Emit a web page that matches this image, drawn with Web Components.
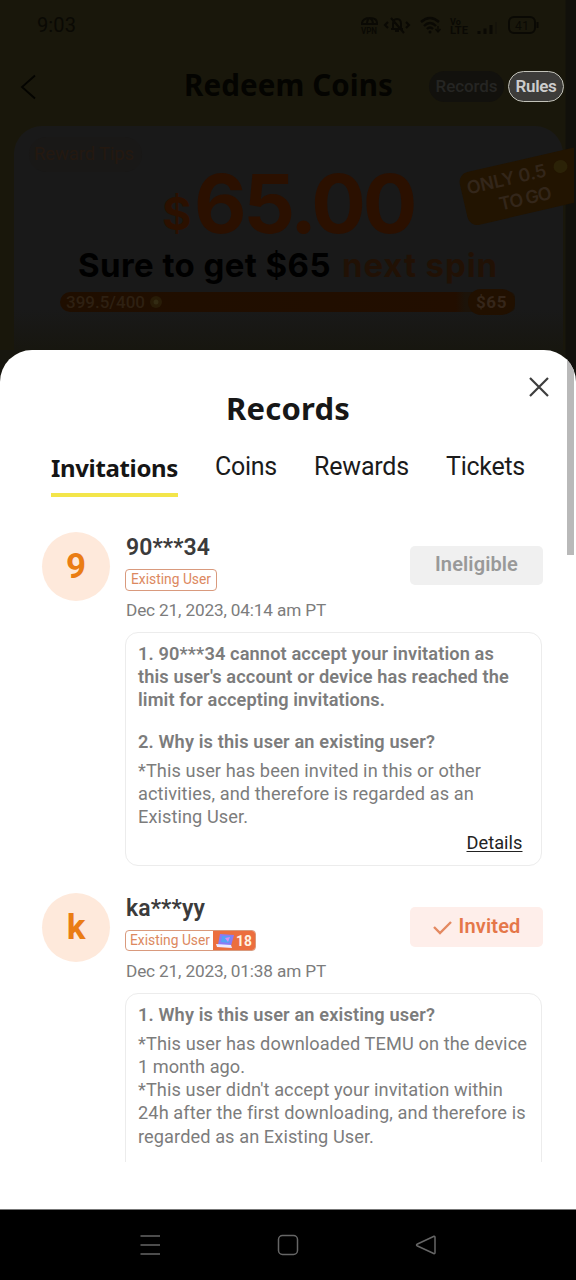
<!DOCTYPE html>
<html lang="en">
<head>
<meta charset="utf-8">
<title>Records</title>
<style>
html, body { margin: 0; padding: 0; background: #000; }
body { width: 576px; height: 1280px; overflow: hidden; font-family: Roboto, "Liberation Sans", sans-serif; }
</style>
</head>
<body>
<reward-app></reward-app>
<script>
const define = (name, html, after) => {
  const template = document.createElement('template');
  template.innerHTML = html;
  customElements.define(name, class extends HTMLElement {
    connectedCallback() {
      if (this.shadowRoot) return;
      this.attachShadow({ mode: 'open' }).append(template.content.cloneNode(true));
      if (after) after(this, this.shadowRoot);
    }
  });
};

/* One line of text; "w" is its width in px, reached by tracking. */
define('text-line', `<style>
:host { display: block; white-space: nowrap; width: max-content; }
span { display: inline-block; }
:host([underlined]) span { text-decoration: underline; text-underline-offset: 2px; }
</style><span><slot></slot></span>`, (el, root) => {
  const w = parseFloat(el.getAttribute('w'));
  if (!w) return;
  const span = root.querySelector('span');
  const n = el.textContent.length;
  const s = (w - span.getBoundingClientRect().width) / n;
  span.style.letterSpacing = s.toFixed(3) + 'px';
});

define('status-bar', `<style>
:host { display: flex; height: 52px; box-sizing: border-box; padding: 0 33px 2px 37px; align-items: center; justify-content: space-between; color: #0a0904; font-size: 20px; }
svg { display: block; }
</style>
<text-line w="39">9:03</text-line>
<svg width="185" height="24" viewBox="0 0 185 24" fill="none" stroke="currentColor" stroke-width="2">
<path d="M4 12V10Q5 5 12 5T19 10V12M4 11H19M9 11Q9 6 12 5Q15 7 15 11"/>
<text x="3" y="21" font-size="9" font-weight="700" fill="currentColor" stroke="none" textLength="16" lengthAdjust="spacingAndGlyphs" font-family="Roboto">VPN</text>
<path d="M33 16H45M35 16V11Q35 6 39 6T43 11V16M37 18H41M33 5L46 20M30 9L27 12L30 15M48 9L51 12L48 15"/>
<path d="M63 9Q72 1 81 9M66 13Q72 7 78 13M69 16Q72 13 75 16" stroke-width="2.4"/><circle cx="72" cy="19" r="1.500" fill="currentColor" stroke="none"/><path d="M80 13V19M77.500 16L80 19L82.500 16" stroke-width="1.300"/>
<text x="92" y="12" font-size="9" font-weight="700" fill="currentColor" stroke="none" font-family="Roboto">Vo</text>
<text x="92" y="21" font-size="10" font-weight="700" fill="currentColor" stroke="none" textLength="18" lengthAdjust="spacingAndGlyphs" font-family="Roboto">LTE</text>
<path d="M121 21V18M127 21V15.500M133 21V12" stroke-width="3"/><path d="M138 21V9" stroke="#15130a" stroke-width="2"/>
<rect x="151" y="4" width="26" height="16" rx="5" stroke-width="2"/><path d="M179.500 9V15"/>
<text x="157" y="16.500" font-size="12" fill="currentColor" stroke="none" font-family="Roboto" textLength="14">41</text>
</svg>`);

define('page-header', `<style>
:host { display: grid; grid-template-columns: 184px 209px 36px 75px 4px 56px; height: 68px; align-items: center; color: #040401; }
svg { display: block; margin: 2px 0 0 20px; }
.title { font: 700 29.500px/40px "Noto Sans", sans-serif; margin-top: -3px; }
.pill { height: 31px; border-radius: 16px; box-sizing: border-box; display: flex; align-items: center; justify-content: center; font-size: 17px; font-weight: 500; }
.pill text-line { margin-top: -1px; }
.dim { background: #12110d; color: #252523; }
.lit { background: #3d3c3a; color: #cdcdcd; border: 1px solid #c2c2b9; font-weight: 600; font-size: 17px; }
</style>
<svg width="17" height="26" viewBox="0 0 17 26" fill="none" stroke="currentColor" stroke-width="1.800"><path d="M15 1.500L2 13L15 24.500"/></svg>
<text-line class="title" w="209">Redeem Coins</text-line><i></i>
<div class="pill dim"><text-line w="62">Records</text-line></div><i></i>
<div class="pill lit"><text-line w="41">Rules</text-line></div>`);

define('reward-card', `<style>
:host { display: block; position: relative; margin: 6px 13px 0 14px; height: 224px; border-radius: 28px 28px 0 0; background: linear-gradient(#191919 82%, #17160f); color: #1d0c00; font-family: Inter, sans-serif; font-weight: 700; }
.tips { position: absolute; left: 15px; top: 11px; width: 113px; height: 35px; border-radius: 18px; background: #191817; font: 400 18.500px/35px Roboto; color: #241810; }
.tips text-line { margin-left: 5px; }
.amount { display: flex; align-items: flex-start; height: 112px; padding: 36px 0 0 148px; color: #2b1000; box-sizing: border-box; }
.amount .cur { font-size: 45px; line-height: 50px; margin: 27px 3px 0 0; }
.amount .num { font-size: 81px; line-height: 84px; }
.line { display: flex; gap: 11px; padding-left: 64px; font-size: 33px; line-height: 36px; height: 54px; padding-top: 9px; box-sizing: border-box; color: #000; }
.line .hl { color: #211105; }
.bar { display: flex; align-items: center; width: 455px; margin-left: 46px; height: 20px; border-radius: 10px 5px 5px 10px; background: linear-gradient(90deg, #1f0e00, #220e00 87%, #1c1309 89%); color: #2e2012; font: 500 17px/20px Roboto; }
.bar .count { margin-left: 6px; flex: none; }
.bar svg { margin-left: 4px; flex: none; }
.bar .goal { margin-left: auto; width: 47px; height: 26px; flex: none; border-radius: 13px; background: #211000; display: flex; align-items: center; justify-content: center; color: #35261a; font-weight: 700; }
.clip { position: absolute; right: -11px; top: 10px; width: 126px; height: 98px; overflow: hidden; }
.ribbon { position: absolute; left: 14px; top: 23px; width: 130px; height: 54px; border-radius: 10px; background: #221401; transform: rotate(-13deg); color: #33261a; font-size: 18px; line-height: 23px; padding-top: 4px; box-sizing: border-box; font-weight: 600; }
.ribbon .a { margin-left: 6px; } .ribbon .b { margin-left: 34px; }
.ribbon i { position: absolute; left: 95px; top: 9px; width: 14px; height: 13px; border-radius: 50%; background: #2b2207; }
</style>
<div class="tips"><text-line w="100">Reward Tips</text-line></div>
<div class="amount"><text-line class="cur" w="29">$</text-line><text-line class="num" w="220">65.00</text-line></div>
<div class="line"><text-line w="253">Sure to get $65</text-line><text-line class="hl" w="156">next spin</text-line></div>
<div class="bar"><text-line class="count" w="79">399.5/400</text-line><svg width="14" height="14" viewBox="0 0 14 14"><circle cx="7" cy="7" r="6" fill="#281c07"/><circle cx="7" cy="7" r="2.500" fill="#332b13"/></svg><div class="goal"><text-line w="31">$65</text-line></div></div>
<div class="clip"><div class="ribbon"><text-line class="a" w="84">ONLY 0.5</text-line><text-line class="b" w="56">TO GO</text-line><i></i></div></div>`);

define('record-tabs', `<style>
:host { display: grid; grid-template-columns: 164px 99px 132px auto; padding-left: 51px; height: 54px; color: #1b1b1b; font-size: 25px; line-height: 31px; }
.on { font: 700 24px/31px "Noto Sans", sans-serif; color: #151515; padding: 1px 0 16px; height: 25px; border-bottom: 4px solid #f3e54a; }
</style>
<text-line class="on" w="127">Invitations</text-line><text-line w="62">Coins</text-line><text-line w="95">Rewards</text-line><text-line w="79">Tickets</text-line>`);

define('user-tag', `<style>
:host { display: flex; width: max-content; height: 22px; box-sizing: border-box; border: 1px solid #d99a7d; border-radius: 4px; color: #dc8860; font-size: 13.800px; line-height: 18px; overflow: hidden; }
.t { margin: 0 5px 0 5px; }
.more { display: none; background: #ec6e3e; color: #fff3e4; font-weight: 700; align-items: center; width: 43px; margin: -1px; height: 22px; }
:host([level]) { height: 21px; }
:host([level]) .more { display: flex; } :host([level]) .t { margin: 0 4px 0 4px; }
svg { margin: 0 1px 0 3px; }
</style>
<text-line class="t" w="80">Existing User</text-line>
<div class="more"><svg width="19" height="16" viewBox="0 0 19 16"><path d="M4 1L18 2L15 13L2 12Z" fill="#8b7bf5"/><path d="M6 3L15 3.500L13 10L5 9Z" fill="#55a2f5"/><path d="M9 5L14 4L12 9Z" fill="#d58cf6"/><path d="M0 11L15 12L16 15L1 14Z" fill="#eee9ff"/></svg><span></span></div>`, (el, root) => {
  root.querySelector('span').textContent = el.getAttribute('level') || '';
});

define('state-button', `<style>
:host { display: flex; width: 133px; height: 39px; border-radius: 5px; background: #f0f0f0; color: #999; align-items: center; justify-content: center; font-size: 20px; font-weight: 600; line-height: 36px; position: relative; left: 1px; }
:host([invited]) { background: #feeeea; color: #e57749; height: 40px; }
text-line, slot { display: block; margin-top: -3px; }
svg { display: none; margin-right: 7px; }
:host([invited]) svg { display: block; }
</style><svg width="19" height="15" viewBox="0 0 19 15" fill="none" stroke="#e48961" stroke-width="2.400"><path d="M1 7L7 13L18 2"/></svg><slot></slot>`);

define('record-entry', `<style>
:host { display: grid; grid-template-columns: 83px 417px; padding-left: 42px; }
.avatar { width: 68px; height: 69px; border-radius: 50%; background: #fee9db; color: #ea7d14; font-size: 35px; font-weight: 700; line-height: 69px; text-align: center; }
.top { display: flex; justify-content: space-between; height: 100px; }
.name { font-size: 23px; line-height: 31px; font-weight: 600; color: #3b3b3b; margin-left: 1px; }
.tag { height: 28px; padding-top: 6px; }
.date { margin: 2px 0 0 1px; font-size: 17.200px; line-height: 22px; color: #7c7c7c; }
.btn { margin-top: 14px; }
.box { box-sizing: border-box; border: 1px solid #ececec; border-radius: 13px; padding: 9px 0 0 12px; color: #7c7c7c; font-size: 18.200px; line-height: 23.200px; }
</style>
<div class="avatar"><slot name="initial"></slot></div>
<div><div class="top"><div><div class="name"><slot name="name"></slot></div><div class="tag"><slot name="tag"></slot></div><div class="date"><slot name="date"></slot></div></div><div class="btn"><slot name="state"></slot></div></div>
<div class="box" part="box"><slot></slot></div></div>`);

define('records-sheet', `<style>
:host { display: block; position: relative; height: 860px; background: #fff; border-radius: 32px 32px 0 0; border-bottom: 1px solid #777; box-sizing: border-box; overflow: hidden; }
.title { font: 700 31px/48px "Noto Sans", sans-serif; color: #171717; padding: 34px 0 0 226px; height: 67px; }
.close { position: absolute; left: 529px; top: 27px; }
.thumb { position: absolute; right: 2px; top: 0; width: 7px; height: 205px; background: #b9b9b9; }
.list { height: 630px; overflow: hidden; margin-top: 27px; }
.first { height: 361px; }
.second { height: 362px; }
.first::part(box) { height: 234px; }
.second::part(box) { height: 240px; }
.b { font-weight: 600; }
</style>
<text-line class="title" w="124">Records</text-line>
<svg class="close" width="20" height="20" viewBox="0 0 20 20" fill="none" stroke="#3d3d3d" stroke-width="2.200"><path d="M1 1L19 19M19 1L1 19"/></svg>
<record-tabs></record-tabs>
<div class="list">
<record-entry class="first"><span slot="initial">9</span><text-line slot="name" w="84">90***34</text-line><user-tag slot="tag"></user-tag><text-line slot="date" w="200">Dec 21, 2023, 04:14 am PT</text-line><state-button slot="state"><text-line w="83">Ineligible</text-line></state-button>
<text-line class="b" w="356">1. 90***34 cannot accept your invitation as</text-line>
<text-line class="b" w="371">this user's account or device has reached the</text-line>
<text-line class="b" w="247">limit for accepting invitations.</text-line>
<text-line class="b" w="297" style="margin:18.500px 0 5.500px">2. Why is this user an existing user?</text-line>
<text-line w="343">*This user has been invited in this or other</text-line>
<text-line w="336">activities, and therefore is regarded as an</text-line>
<text-line w="110">Existing User.</text-line>
<text-line w="56" underlined style="margin:3px 0 0 328.500px;color:#222">Details</text-line>
</record-entry>
<record-entry class="second"><span slot="initial">k</span><text-line slot="name" w="79">ka***yy</text-line><user-tag slot="tag" level="18"></user-tag><text-line slot="date" w="200">Dec 21, 2023, 01:38 am PT</text-line><state-button slot="state" invited><text-line w="62">Invited</text-line></state-button>
<text-line class="b" w="297" style="margin-bottom:5.500px">1. Why is this user an existing user?</text-line>
<text-line w="389">*This user has downloaded TEMU on the device</text-line>
<text-line w="107">1 month ago.</text-line>
<text-line w="365">*This user didn't accept your invitation within</text-line>
<text-line w="387">24h after the first downloading, and therefore is</text-line>
<text-line w="236">regarded as an Existing User.</text-line>
</record-entry>
</div>
<div class="thumb"></div>`);

define('nav-bar', `<style>
:host { display: flex; height: 70px; box-sizing: border-box; background: #000; justify-content: center; gap: 116px; padding-bottom: 1px; align-items: center; }
</style>
<svg width="22" height="22" viewBox="0 0 22 22" stroke="#666" stroke-width="1.500"><path d="M1.500 2H21M1.500 11H21M1.500 20H21"/></svg>
<svg width="22" height="22" viewBox="0 0 22 22" fill="none" stroke="#666" stroke-width="1.500"><rect x="1.500" y="1.500" width="19" height="19" rx="4"/></svg>
<svg width="22" height="22" viewBox="0 0 22 22" fill="none" stroke="#666" stroke-width="1.500"><path d="M19 2.300Q20 2 20 3.500V18.500Q20 20 18.700 19.500L2.500 12Q0.500 11 2.500 10Z"/></svg>`);

define('reward-app', `<style>
:host { display: block; width: 576px; height: 1280px; }
.back { height: 350px; background: linear-gradient(90deg, #19170b 565px, #11100b 566px); }
.wrap { background: linear-gradient(90deg, #17160f 565px, #11100c 566px); }
</style>
<div class="wrap"><div class="back"><status-bar></status-bar><page-header></page-header><reward-card></reward-card></div>
<records-sheet></records-sheet></div><nav-bar></nav-bar>`);
</script>
</body>
</html>
